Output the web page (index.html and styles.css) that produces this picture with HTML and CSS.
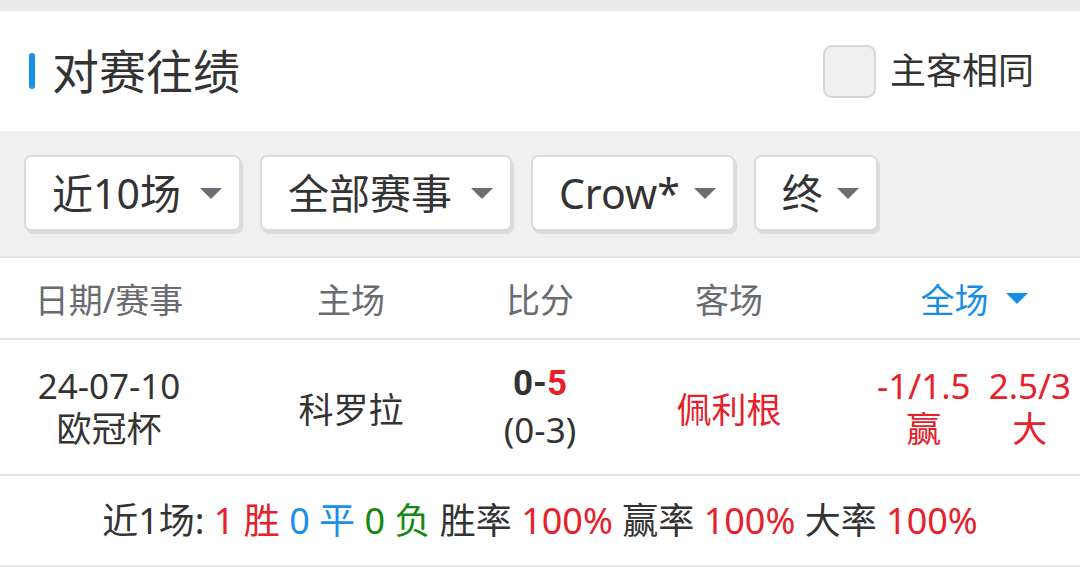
FILE: index.html
```html
<!DOCTYPE html>
<html lang="zh-CN">
<head>
<meta charset="utf-8">
<title>对赛往绩</title>
<link rel="stylesheet" href="styles.css">
</head>
<body>
<main class="card">
  <header class="title-bar">
    <div class="title">
      <span class="accent"></span>
      <h2 class="title-text">对赛往绩</h2>
    </div>
    <label class="same">
      <span class="checkbox"></span>
      <span class="same-text">主客相同</span>
    </label>
  </header>

  <div class="filters">
    <button class="select"><span class="select-text">近10场</span><span class="caret"></span></button>
    <button class="select"><span class="select-text">全部赛事</span><span class="caret"></span></button>
    <button class="select tight"><span class="select-text">Crow*</span><span class="caret"></span></button>
    <button class="select tight"><span class="select-text">终</span><span class="caret"></span></button>
  </div>

  <div class="grid thead">
    <div class="cell">日期/赛事</div>
    <div class="cell">主场</div>
    <div class="cell">比分</div>
    <div class="cell">客场</div>
    <div class="cell active">全场<span class="caret blue"></span></div>
  </div>

  <div class="grid trow">
    <div class="cell stack">
      <span>24-07-10</span>
      <span>欧冠杯</span>
    </div>
    <div class="cell">科罗拉</div>
    <div class="cell stack score">
      <span class="ft">0-<span class="red">5</span></span>
      <span class="ht">(0-3)</span>
    </div>
    <div class="cell red">佩利根</div>
    <div class="cell odds">
      <div class="stack red">
        <span>-1/1.5</span>
        <span>赢</span>
      </div>
      <div class="stack red">
        <span>2.5/3</span>
        <span>大</span>
      </div>
    </div>
  </div>

  <div class="summary">
    <p class="summary-line">近1场: <span class="red">1 胜</span> <span class="blue-t">0 平</span> <span class="green">0 负</span> 胜率 <span class="red">100%</span> 赢率 <span class="red">100%</span> 大率 <span class="red">100%</span></p>
  </div>
</main>
</body>
</html>
```

FILE: styles.css
```css
* {
  box-sizing: border-box;
}

html, body {
  margin: 0;
  padding: 0;
}

body {
  background: #ebebeb;
  font-family: "Noto Sans", "Noto Sans CJK SC", sans-serif;
  color: #333;
  padding-top: 11px;
  width: 1080px;
  height: 567px;
  overflow: hidden;
}

.card {
  background: #fff;
}

.title-bar {
  height: 120px;
  display: flex;
  align-items: center;
  justify-content: space-between;
  padding: 0 46px 0 29px;
}

.title {
  display: flex;
  align-items: center;
  gap: 17px;
}

.accent {
  width: 6px;
  height: 36px;
  border-radius: 3px;
  background: #1a8fe8;
}

.title-text {
  margin: 0;
  font-size: 47px;
  font-weight: 400;
  color: #333;
  line-height: 1;
}

.same {
  display: flex;
  align-items: center;
  gap: 14px;
}

.checkbox {
  width: 53px;
  height: 53px;
  border: 2px solid #d6d6d6;
  border-radius: 9px;
  background: #efefef;
}

.same-text {
  font-size: 36px;
  color: #333;
  line-height: 1;
}

.filters {
  background: #f0f0f0;
  height: 127px;
  border-bottom: 2px solid #e3e3e3;
  display: flex;
  align-items: flex-start;
  gap: 19px;
  padding: 24px 0 0 24px;
}

.select {
  display: flex;
  align-items: center;
  gap: 19px;
  height: 76px;
  padding: 0 17px 0 26px;
  background: #fff;
  border: 2px solid #dadada;
  border-radius: 7px;
  box-shadow: 2px 3px 0 #dcdcdc;
  font-family: inherit;
  cursor: pointer;
}

.select.tight {
  gap: 14px;
}

.select-text {
  font-size: 41px;
  color: #333;
  line-height: 1;
}

.caret {
  width: 0;
  height: 0;
  border-left: 11px solid transparent;
  border-right: 11px solid transparent;
  border-top: 11px solid #6b6d75;
}

.caret.blue {
  border-top-color: #168ee6;
  margin-left: 17px;
}

.grid {
  display: grid;
  grid-template-columns: 218px 266px 112px 266px 218px;
}

.cell {
  display: flex;
  align-items: center;
  justify-content: center;
  text-align: center;
  white-space: nowrap;
}

.thead {
  height: 82px;
  border-bottom: 2px solid #e5e5e5;
  font-size: 34px;
  color: #6a6b70;
}

.thead .active {
  color: #168ee6;
  padding-left: 6px;
}

.trow {
  height: 136px;
  border-bottom: 2px solid #e5e5e5;
  font-size: 35px;
  color: #333;
}

.stack {
  display: flex;
  flex-direction: column;
  align-items: center;
  line-height: 43px;
}

.score {
  line-height: 46px;
}

.score .ft {
  font-family: Roboto, "Noto Sans", sans-serif;
  font-weight: 700;
  font-size: 35px;
}

.score .ht {
  font-size: 35px;
}

.odds {
  gap: 18px;
  padding-left: 6px;
}

.red {
  color: #e8202a;
}

.blue-t {
  color: #1890e8;
}

.green {
  color: #13870f;
}

.summary {
  height: 91px;
  border-bottom: 2px solid #e5e5e5;
  display: flex;
  align-items: center;
  justify-content: center;
}

.summary-line {
  margin: 0;
  font-size: 36px;
  line-height: 1.2;
  color: #333;
  white-space: nowrap;
}
```
